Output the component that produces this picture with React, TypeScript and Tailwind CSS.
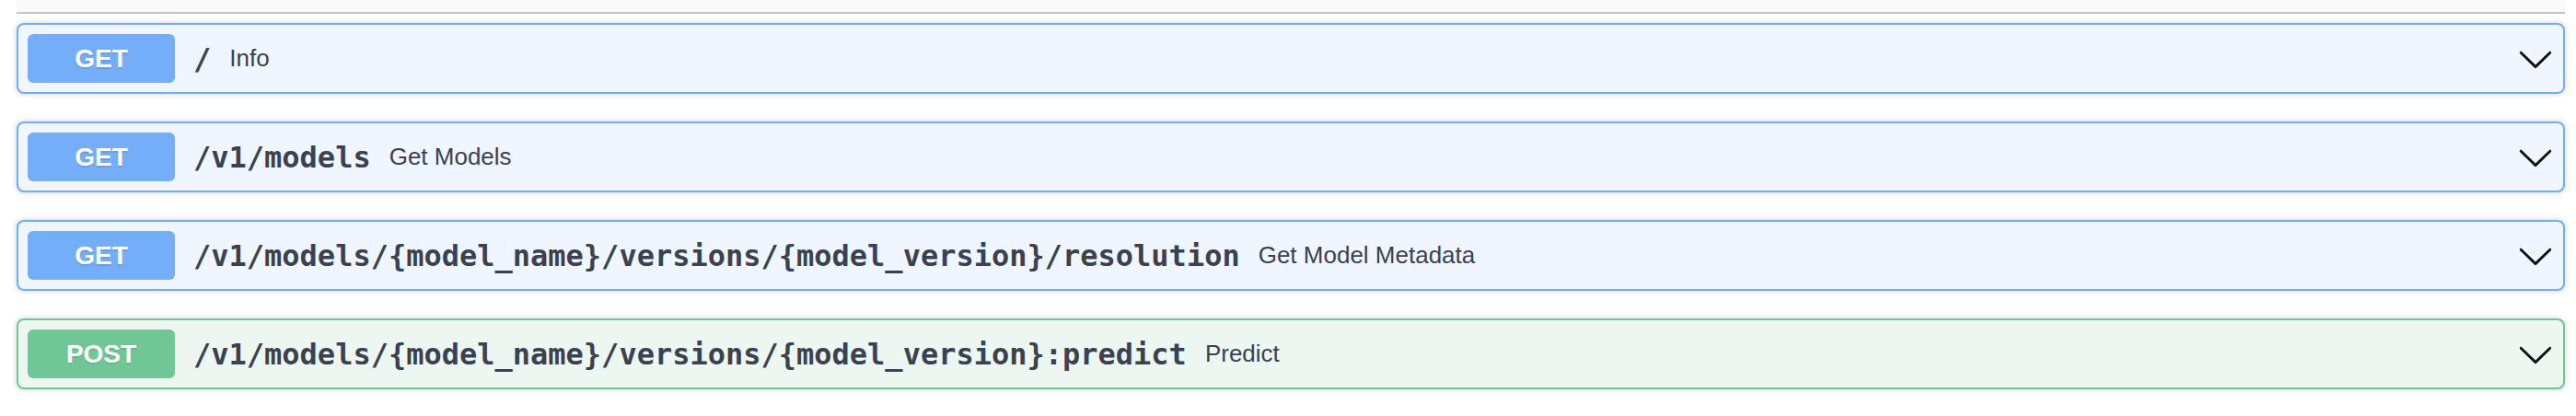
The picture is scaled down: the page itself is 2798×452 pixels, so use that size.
import React from "react";

type Op = {
  method: "GET" | "POST";
  path: string;
  summary: string;
};

const ops: Op[] = [
  { method: "GET", path: "/", summary: "Info" },
  { method: "GET", path: "/v1/models", summary: "Get Models" },
  {
    method: "GET",
    path: "/v1/models/{model_name}/versions/{model_version}/resolution",
    summary: "Get Model Metadata",
  },
  {
    method: "POST",
    path: "/v1/models/{model_name}/versions/{model_version}:predict",
    summary: "Predict",
  },
];

function Chevron() {
  return (
    <svg width="40" height="40" viewBox="0 0 20 20" className="shrink-0">
      <path
        fill="#111"
        d="M17.418 6.109c.272-.268.709-.268.979 0s.271.701 0 .969l-7.908 7.83c-.27.268-.707.268-.979 0l-7.908-7.83c-.27-.268-.27-.701 0-.969.271-.268.709-.268.979 0L10 13.25l7.418-7.141z"
      />
    </svg>
  );
}

function OpBlock({ op }: { op: Op }) {
  const isGet = op.method === "GET";
  return (
    <div
      className={
        isGet
          ? "flex h-[77px] items-center rounded-[8px] border-2 border-[#72aef8] bg-[#eff6ff] px-[10px] shadow-[0_0_6px_rgba(0,0,0,0.19)]"
          : "flex h-[77px] items-center rounded-[8px] border-2 border-[#70c795] bg-[#edf7f1] px-[10px] shadow-[0_0_6px_rgba(0,0,0,0.19)]"
      }
    >
      <span
        className={
          isGet
            ? "flex h-[53px] w-[160px] shrink-0 items-center justify-center rounded-[6px] bg-[#74aef8] font-['Liberation_Sans',Arial,sans-serif] text-[28px] font-bold text-white [text-shadow:0_2px_0_rgba(0,0,0,0.1)]"
            : "flex h-[53px] w-[160px] shrink-0 items-center justify-center rounded-[6px] bg-[#70c795] font-['Liberation_Sans',Arial,sans-serif] text-[28px] font-bold text-white [text-shadow:0_2px_0_rgba(0,0,0,0.1)]"
        }
      >
        {op.method}
      </span>
      <span className="px-[20px] font-['DejaVu_Sans_Mono',monospace] text-[32px] font-bold whitespace-nowrap text-[#3b4151]">
        {op.path}
      </span>
      <span className="flex-1 font-['Liberation_Sans',Arial,sans-serif] text-[26px] whitespace-nowrap text-[#3b4151]">
        {op.summary}
      </span>
      <Chevron />
    </div>
  );
}

export default function App() {
  return (
    <div className="min-h-[452px] bg-white pr-[12px] pl-[18px]">
      <div className="h-[15px] border-b-2 border-[#c4c4c6] bg-[#fafafa]" />
      <div className="mt-[10px] flex flex-col gap-[30px]">
        {ops.map((op) => (
          <OpBlock key={op.path} op={op} />
        ))}
      </div>
    </div>
  );
}
